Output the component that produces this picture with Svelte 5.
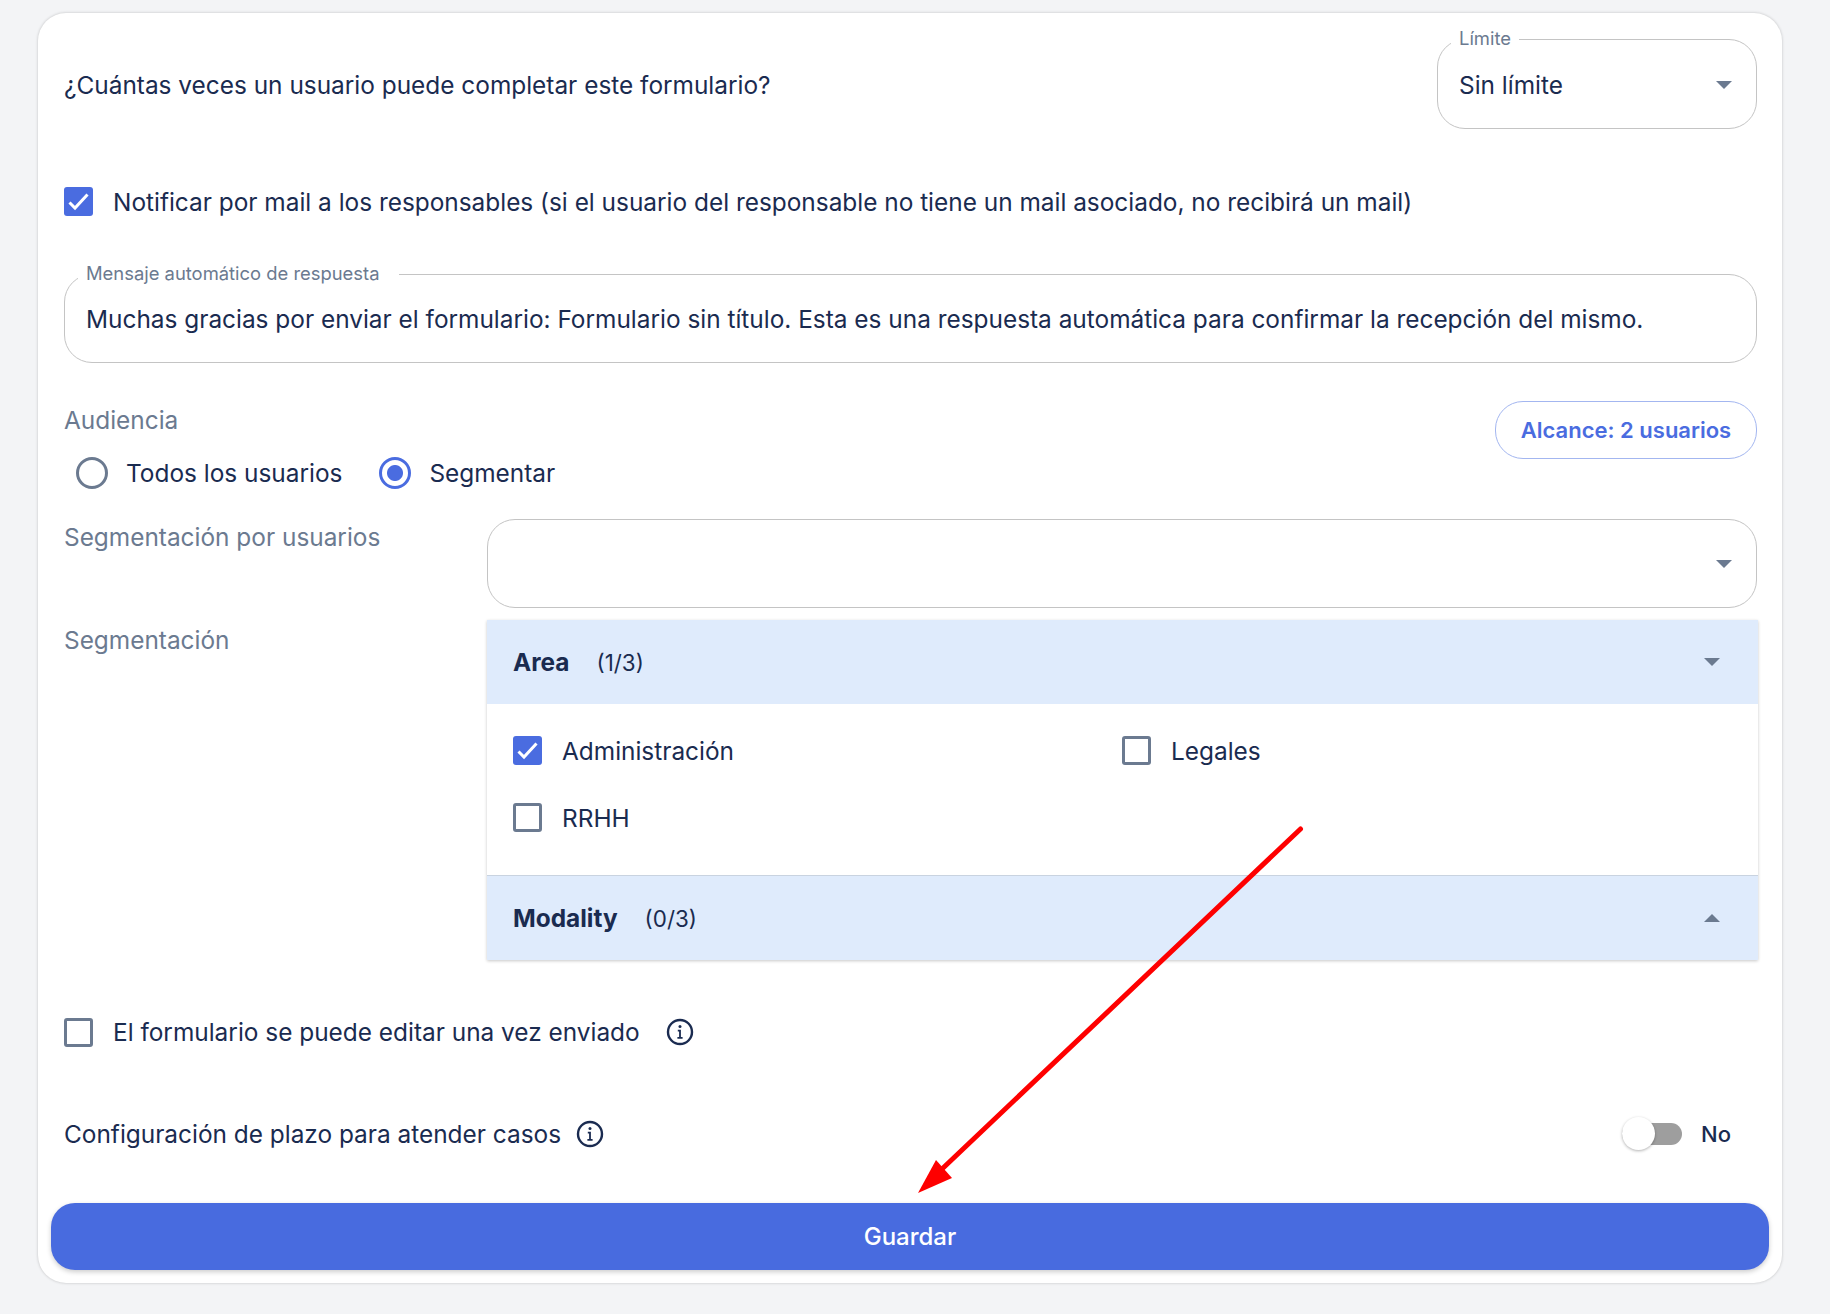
<script>
  const options = [
    { id: 'admin', label: 'Administración', checked: true },
    { id: 'legales', label: 'Legales', checked: false },
    { id: 'rrhh', label: 'RRHH', checked: false }
  ];
</script>

{#snippet check(checked)}
  <span class="box" class:on={checked}>
    {#if checked}
      <svg viewBox="0 0 29 29" width="29" height="29"><path d="M5.5 15.5l5.5 5.5L23.5 7.5" fill="none" stroke="#fff" stroke-width="3" /></svg>
    {/if}
  </span>
{/snippet}

{#snippet info()}
  <svg class="info" viewBox="0 0 28 28" width="28" height="28">
    <circle cx="14" cy="14" r="12" fill="none" stroke="#1a2b50" stroke-width="2.4" />
    <circle cx="14" cy="8.6" r="1.5" fill="#1a2b50" />
    <path d="M11.8 12.6h2.2v7M11.4 19.8h5.2" fill="none" stroke="#1a2b50" stroke-width="1.8" />
  </svg>
{/snippet}

<div class="page">
  <div class="card">
    <div class="form">
      <div class="limit-row">
        <span class="question">¿Cuántas veces un usuario puede completar este formulario?</span>
        <div class="outlined limit">
          <span class="float">Límite</span>
          <span>Sin límite</span>
          <span class="caret"></span>
        </div>
      </div>

      <div class="check-row notify">
        {@render check(true)}
        <span>Notificar por mail a los responsables (si el usuario del responsable no tiene un mail asociado, no recibirá un mail)</span>
      </div>

      <div class="outlined message">
        <span class="float wide">Mensaje automático de respuesta</span>
        <span>Muchas gracias por enviar el formulario: Formulario sin título. Esta es una respuesta automática para confirmar la recepción del mismo.</span>
      </div>

      <div class="audience">
        <div>
          <div class="muted">Audiencia</div>
          <div class="radios">
            <span class="radio"><span class="dot"></span>Todos los usuarios</span>
            <span class="radio"><span class="dot on"></span>Segmentar</span>
          </div>
        </div>
        <button class="reach">Alcance: 2 usuarios</button>
      </div>

      <div class="seg-grid">
        <div class="muted seg-label">Segmentación por usuarios</div>
        <div class="outlined users"><span class="caret"></span></div>

        <div class="muted seg-label second">Segmentación</div>
        <div class="accordion">
          <div class="acc-head">
            <strong>Area</strong><span>(1/3)</span>
            <span class="caret"></span>
          </div>
          <div class="acc-body">
            {#each options as opt (opt.id)}
              <div class="check-row">
                {@render check(opt.checked)}
                <span>{opt.label}</span>
              </div>
            {/each}
          </div>
          <div class="acc-head last">
            <strong>Modality</strong><span>(0/3)</span>
            <span class="caret up"></span>
          </div>
        </div>
      </div>

      <div class="check-row editable">
        {@render check(false)}
        <span>El formulario se puede editar una vez enviado</span>
        {@render info()}
      </div>

      <div class="deadline">
        <span>Configuración de plazo para atender casos</span>
        {@render info()}
        <div class="toggle"><span class="knob"></span></div>
        <span class="no">No</span>
      </div>
    </div>

    <button class="save">Guardar</button>
  </div>

  <!-- red annotation arrow drawn over the form -->
  <svg class="arrow" viewBox="0 0 1830 1314" width="1830" height="1314">
    <path d="M1300.5 829L942 1169" fill="none" stroke="#fe0000" stroke-width="5" stroke-linecap="round" />
    <path d="M918 1193L936 1160L952 1178Z" fill="#fe0000" />
  </svg>
</div>

<style>
  :global(body) {
    margin: 0;
    background: #f3f4f6;
  }

  .page {
    position: relative;
    padding: 13px 48px 31px 38px;
    font-family: Inter, "Noto Sans", sans-serif;
    font-size: 24.4px;
    color: #1a2b50;
  }

  .card {
    background: #fff;
    border-radius: 28px;
    box-shadow: 0 0 3px rgba(0, 0, 0, 0.22);
    padding: 26px 13px 13px 13px;
  }

  .form {
    padding: 0 12px 0 13px;
  }

  .muted {
    color: #6b7a90;
  }

  .limit-row {
    display: flex;
    align-items: center;
    justify-content: space-between;
  }

  .question {
    margin-top: 2px;
  }

  .outlined {
    position: relative;
    box-sizing: border-box;
    border: 1.5px solid #c4c4c4;
    border-radius: 28px;
    display: flex;
    align-items: center;
  }

  .float {
    position: absolute;
    top: -13px;
    left: 13px;
    padding: 0 8px;
    background: #fff;
    font-size: 18.4px;
    line-height: 22px;
    color: #6b7a90;
  }

  .float.wide {
    padding-right: 20px;
  }

  .limit {
    width: 320px;
    height: 90px;
    padding: 2px 24px 0 21px;
    justify-content: space-between;
  }

  .caret {
    width: 0;
    height: 0;
    border-left: 8px solid transparent;
    border-right: 8px solid transparent;
    border-top: 8px solid #6b7a90;
  }

  .caret.up {
    border-top: none;
    border-bottom: 8px solid #6b7a90;
  }

  .check-row {
    display: flex;
    align-items: center;
    gap: 20px;
  }

  .box {
    box-sizing: border-box;
    flex: none;
    width: 29px;
    height: 29px;
    border: 3px solid #6b7a90;
    border-radius: 3px;
    display: flex;
    align-items: center;
    justify-content: center;
  }

  .box.on {
    background: #4a6ce0;
    border: none;
  }

  .notify {
    margin-top: 58px;
  }

  .notify .box,
  .acc-body .box {
    margin-top: -2px;
  }

  .message {
    margin-top: 57px;
    height: 89px;
    padding: 0 21px;
  }

  .audience {
    display: flex;
    justify-content: space-between;
    align-items: flex-start;
    margin-top: 38px;
    height: 118px;
  }

  .audience .muted {
    margin-top: 4px;
    line-height: 30px;
  }

  .radios {
    display: flex;
    gap: 37px;
    margin-top: 22px;
    padding-left: 12px;
  }

  .radio {
    display: flex;
    align-items: center;
    gap: 18px;
    line-height: 32px;
  }

  .dot {
    box-sizing: border-box;
    width: 32px;
    height: 32px;
    border: 3px solid #6b7a90;
    border-radius: 50%;
  }

  .dot.on {
    border-color: #4a6ce0;
    background: radial-gradient(circle, #4a6ce0 0 7.5px, transparent 8.5px);
  }

  .reach {
    box-sizing: border-box;
    width: 262px;
    height: 58px;
    border: 1.5px solid #a3b6f0;
    border-radius: 28px;
    background: #fff;
    color: #4a6ce0;
    font: 600 22px Inter, sans-serif;
  }

  .seg-grid {
    display: grid;
    grid-template-columns: 423px 1fr;
    row-gap: 12px;
  }

  .seg-label {
    line-height: 30px;
    margin-top: 3px;
  }

  .seg-label.second {
    margin-top: 5px;
  }

  .users {
    height: 89px;
    padding: 0 24px;
    justify-content: flex-end;
  }

  .accordion {
    box-shadow: 0 1px 3px rgba(0, 0, 0, 0.22);
    margin-right: -1px;
  }

  .acc-head {
    display: flex;
    align-items: center;
    gap: 27px;
    height: 84px;
    padding: 0 38px 0 26px;
    background: #dfebfc;
  }

  .acc-head.last {
    height: 85px;
    border-top: 1px solid #c9d3e0;
    box-sizing: border-box;
  }

  .acc-head strong {
    font-weight: 700;
  }

  .acc-head span:nth-child(2) {
    font-size: 22.4px;
  }

  .acc-head .caret {
    margin-left: auto;
  }

  .acc-body {
    display: grid;
    grid-template-columns: 609px 1fr;
    row-gap: 37px;
    padding: 32px 26px 42px;
  }

  .editable {
    margin-top: 57px;
  }

  .editable .info {
    margin-left: 6px;
  }

  .deadline {
    display: flex;
    align-items: center;
    margin-top: 72px;
    height: 30px;
  }

  .deadline .info {
    margin-left: 15px;
  }

  .toggle {
    position: relative;
    width: 60px;
    height: 22px;
    margin-left: auto;
    background: #9e9e9e;
    border-radius: 11px;
  }

  .knob {
    position: absolute;
    left: 0;
    top: -6px;
    width: 33px;
    height: 33px;
    border-radius: 50%;
    background: #fff;
    box-shadow: 0 1px 3px rgba(0, 0, 0, 0.3);
  }

  .no {
    margin-left: 19px;
    margin-right: 26px;
    font-size: 22px;
    font-weight: 500;
  }

  .save {
    display: block;
    width: 100%;
    height: 67px;
    margin-top: 54px;
    border: none;
    border-radius: 24px;
    background: #486bdf;
    color: #fff;
    font: 500 24px Inter, sans-serif;
    box-shadow: 0 2px 5px rgba(0, 0, 0, 0.2);
  }

  .arrow {
    position: absolute;
    left: 0;
    top: 0;
    pointer-events: none;
  }
</style>
